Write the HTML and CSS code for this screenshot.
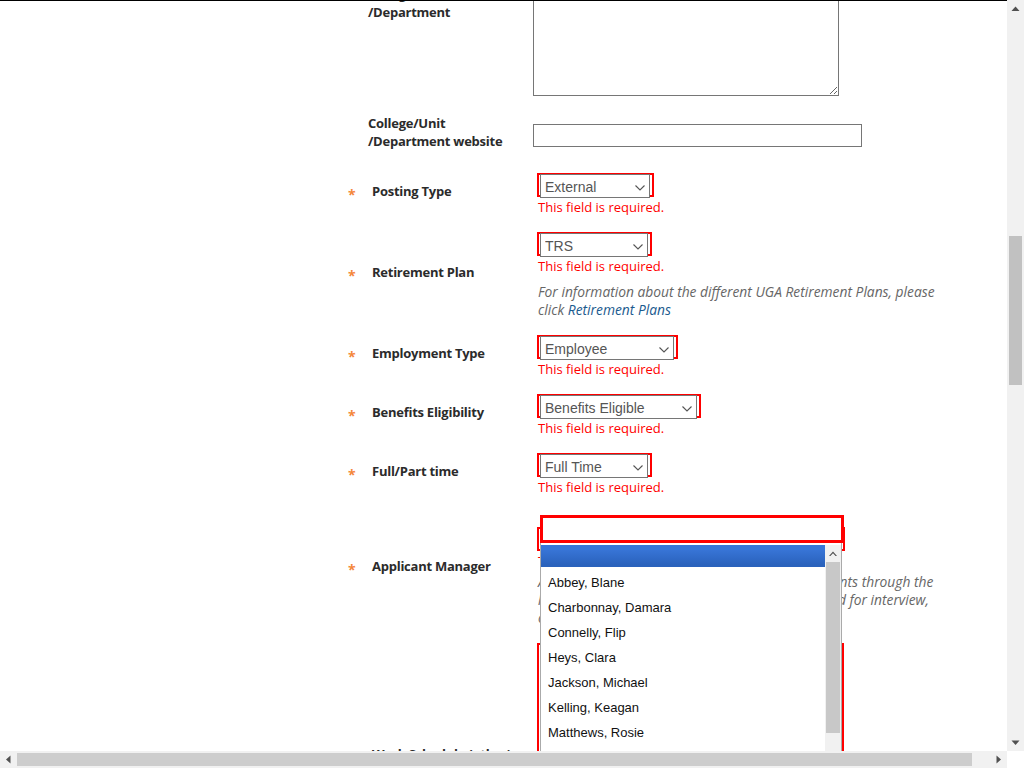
FILE: index.html
```html
<!DOCTYPE html>
<html lang="en">
<head>
    <meta charset="UTF-8">
    <meta name="viewport" content="width=device-width, initial-scale=1.0">
    <title>Create Posting</title>
    <link rel="stylesheet" href="styles.css">
</head>
<body>
    <div class="screen">
        <div class="page">
            <form class="posting-form">
                <div class="row row-top">
                    <span class="star"></span>
                    <label class="label">College/Unit<br>/Department</label>
                    <div class="field"><textarea class="textarea"></textarea></div>
                </div>
                <div class="row row-top row-website">
                    <span class="star"></span>
                    <label class="label">College/Unit<br>/Department website</label>
                    <div class="field"><input type="text" class="text-input"></div>
                </div>

                <div class="row">
                    <span class="star">*</span>
                    <label class="label req">Posting Type</label>
                    <div class="field field-req">
                        <div class="select-wrap">
                            <select class="select w-110"><option>External</option></select>
                            <svg class="chevron" width="10" height="6" viewBox="0 0 10 6"><path d="M0.5 0.5 L5 5 L9.5 0.5" fill="none" stroke="#555" stroke-width="1.1"/></svg>
                        </div>
                        <div class="error">This field is required.</div>
                    </div>
                </div>

                <div class="row">
                    <span class="star">*</span>
                    <label class="label req">Retirement Plan</label>
                    <div class="field field-req">
                        <div class="select-wrap">
                            <select class="select w-108"><option>TRS</option></select>
                            <svg class="chevron" width="10" height="6" viewBox="0 0 10 6"><path d="M0.5 0.5 L5 5 L9.5 0.5" fill="none" stroke="#555" stroke-width="1.1"/></svg>
                        </div>
                        <div class="error">This field is required.</div>
                        <p class="help">For information about the different UGA Retirement Plans, please click <a href="#">Retirement Plans</a></p>
                    </div>
                </div>

                <div class="row">
                    <span class="star">*</span>
                    <label class="label req">Employment Type</label>
                    <div class="field field-req">
                        <div class="select-wrap">
                            <select class="select w-134"><option>Employee</option></select>
                            <svg class="chevron" width="10" height="6" viewBox="0 0 10 6"><path d="M0.5 0.5 L5 5 L9.5 0.5" fill="none" stroke="#555" stroke-width="1.1"/></svg>
                        </div>
                        <div class="error">This field is required.</div>
                    </div>
                </div>

                <div class="row">
                    <span class="star">*</span>
                    <label class="label req">Benefits Eligibility</label>
                    <div class="field field-req">
                        <div class="select-wrap">
                            <select class="select w-157"><option>Benefits Eligible</option></select>
                            <svg class="chevron" width="10" height="6" viewBox="0 0 10 6"><path d="M0.5 0.5 L5 5 L9.5 0.5" fill="none" stroke="#555" stroke-width="1.1"/></svg>
                        </div>
                        <div class="error">This field is required.</div>
                    </div>
                </div>

                <div class="row">
                    <span class="star">*</span>
                    <label class="label req">Full/Part time</label>
                    <div class="field field-req">
                        <div class="select-wrap">
                            <select class="select w-108"><option>Full Time</option></select>
                            <svg class="chevron" width="10" height="6" viewBox="0 0 10 6"><path d="M0.5 0.5 L5 5 L9.5 0.5" fill="none" stroke="#555" stroke-width="1.1"/></svg>
                        </div>
                        <div class="error">This field is required.</div>
                    </div>
                </div>

                <div class="row">
                    <span class="star">*</span>
                    <label class="label req">Applicant Manager</label>
                    <div class="field field-req">
                        <div class="chosen-wrap">
                            <div class="chosen-drop">
                                <div class="chosen-search"></div>
                                <div class="chosen-list">
                                    <ul class="chosen-results">
                                        <li class="highlighted"></li>
                                        <li>Abbey, Blane</li>
                                        <li>Charbonnay, Damara</li>
                                        <li>Connelly, Flip</li>
                                        <li>Heys, Clara</li>
                                        <li>Jackson, Michael</li>
                                        <li>Kelling, Keagan</li>
                                        <li>Matthews, Rosie</li>
                                        <li>SNOW, JOHN</li>
                                        <li>Thompson, Lee</li>
                                    </ul>
                                    <div class="list-scroll">
                                        <div class="list-btn">
                                            <svg width="16" height="17" viewBox="0 0 16 17"><path d="M4 11 L8 6.5 L12 11 L10.6 11 L8 8.2 L5.4 11 Z" fill="#505050"/></svg>
                                        </div>
                                        <div class="list-thumb"></div>
                                    </div>
                                </div>
                            </div>
                        </div>
                        <div class="error">This field is required.</div>
                        <p class="help help-am">Applicant Managers can review and move applicants through the<br>hiring workflow, including those who were selected for interview,<br>offer and hire.</p>
                    </div>
                </div>

                <div class="row">
                    <span class="star"></span>
                    <label class="label req">Work Schedule (other)</label>
                    <div class="field field-req">
                        <div class="schedule-box"></div>
                    </div>
                </div>
            </form>
        </div>

        <div class="vscroll">
            <div class="sb-btn">
                <svg width="17" height="17" viewBox="0 0 17 17"><path d="M4.5 11 L8.5 6.5 L12.5 11 Z" fill="#505050"/></svg>
            </div>
            <div class="sb-track-v"><div class="sb-thumb-v"></div></div>
            <div class="sb-btn">
                <svg width="17" height="17" viewBox="0 0 17 17"><path d="M4.5 6.5 L8.5 11 L12.5 6.5 Z" fill="#505050"/></svg>
            </div>
        </div>

        <div class="hscroll">
            <div class="sb-btn">
                <svg width="17" height="17" viewBox="0 0 17 17"><path d="M10.5 4.5 L6 8.5 L10.5 12.5 Z" fill="#505050"/></svg>
            </div>
            <div class="sb-track-h"><div class="sb-thumb-h"></div></div>
            <div class="sb-btn">
                <svg width="17" height="17" viewBox="0 0 17 17"><path d="M6.5 4.5 L11 8.5 L6.5 12.5 Z" fill="#505050"/></svg>
            </div>
        </div>
        <div class="corner"></div>
    </div>
</body>
</html>
```

FILE: styles.css
```css
* {
    box-sizing: border-box;
}
html, body {
    margin: 0;
    padding: 0;
}
body {
    font-family: "Open Sans", sans-serif;
    color: #333;
    background-color: #fff;
}
.screen {
    display: grid;
    grid-template-columns: 1007px 17px;
    grid-template-rows: 751px 17px;
    width: 1024px;
    height: 768px;
    overflow: hidden;
}
.page {
    border-top: 1px solid #000;
    overflow: hidden;
    background-color: #fff;
}
.posting-form {
    margin: -16px 0 0 345px;
}

/* form rows */
.row {
    display: grid;
    grid-template-columns: 23px 165px auto;
    align-items: center;
    margin-bottom: 16px;
}
.row-top {
    align-items: start;
    margin-bottom: 17px;
}
.row-website {
    margin-bottom: 23px;
}
.row-website .label {
    padding-top: 1px;
}
.star {
    color: #f4873a;
    font-size: 14px;
    font-weight: bold;
    line-height: 17px;
    padding: 6px 0 0 3px;
    margin-bottom: 6px;
}
.label {
    font-size: 13px;
    font-weight: bold;
    line-height: 17px;
    letter-spacing: -0.25px;
    color: #2b2b2b;
    margin-bottom: 6px;
}
.row-top .label {
    line-height: 18px;
    margin-bottom: 0;
}
.label.req {
    padding-left: 4px;
}
.field-req {
    padding-left: 4px;
}

.textarea {
    display: block;
    width: 306px;
    height: 111px;
    border: 1px solid #767676;
    border-radius: 0;
    background-color: #fff;
}
.text-input {
    display: block;
    width: 329px;
    height: 23px;
    margin-top: 11px;
    border: 1px solid #767676;
    border-radius: 0;
    background-color: #fff;
}

/* red invalid outline round the selects */
.select-wrap {
    position: relative;
    display: inline-flex;
    height: 24px;
    border: 2px solid #f00;
    padding: 0 2px 0 1px;
}
.select {
    appearance: none;
    -webkit-appearance: none;
    height: 24px;
    margin-top: -1px;
    padding: 2px 0 0 4px;
    font-family: Arial, "Liberation Sans", sans-serif;
    font-size: 14px;
    color: #555;
    background-color: #fff;
    border: 1px solid #767676;
    border-radius: 0;
}
.chevron {
    position: absolute;
    top: 10px;
    right: 7px;
}
.w-108 { width: 108px; }
.w-110 { width: 110px; }
.w-134 { width: 134px; }
.w-157 { width: 157px; }

.error {
    color: #f00;
    font-size: 13px;
    line-height: 18px;
    margin-top: 1px;
    padding-left: 1px;
}
.help {
    font-size: 13.8px;
    font-style: italic;
    line-height: 18px;
    color: #666;
    max-width: 412px;
    margin: 8px 0 0 1px;
}
.help a {
    color: #1b5a8e;
    text-decoration: none;
}
.help-am {
    max-width: 430px;
    margin-top: 3px;
}

/* applicant manager chosen dropdown (opened) */
.chosen-wrap {
    position: relative;
    width: 308px;
    height: 24px;
    margin-top: 15px;
    border: 2px solid #f00;
}
.chosen-drop {
    position: absolute;
    top: -14px;
    left: 1px;
    z-index: 5;
}
.chosen-search {
    width: 304px;
    height: 28px;
    border: 3px solid #f00;
    background-color: #fff;
}
.chosen-list {
    display: flex;
    width: 302px;
    height: 280px;
    padding-top: 2px;
    background-color: #fff;
    border: 1px solid #aaa;
    border-top: none;
}
.chosen-results {
    flex: 1;
    list-style: none;
    margin: 0;
    padding: 0;
    font-family: Arial, "Liberation Sans", sans-serif;
    font-size: 13px;
    color: #111;
}
.chosen-results li {
    height: 25px;
    line-height: 25px;
    padding-left: 7px;
}
.chosen-results li.highlighted {
    height: 22px;
    margin-bottom: 3px;
    background: linear-gradient(#3875d7 20%, #2a62bc 90%);
}
.list-scroll {
    display: flex;
    flex-direction: column;
    width: 16px;
    background-color: #f1f1f1;
}
.list-btn {
    height: 17px;
}
.list-btn svg {
    display: block;
}
.list-thumb {
    height: 171px;
    margin: 0 1px;
    background-color: #c8c8c8;
}

.schedule-box {
    width: 307px;
    height: 228px;
    border: 2px solid #f00;
}

/* window scrollbars */
.vscroll {
    display: flex;
    flex-direction: column;
    background-color: #f1f1f1;
}
.hscroll {
    display: flex;
    background-color: #f1f1f1;
}
.sb-btn {
    width: 17px;
    height: 17px;
    flex: none;
}
.sb-btn svg {
    display: block;
}
.sb-track-v {
    flex: 1;
    padding-top: 219px;
}
.sb-thumb-v {
    height: 149px;
    margin: 0 2px;
    background-color: #c1c1c1;
}
.sb-track-h {
    flex: 1;
    padding-top: 2px;
}
.sb-thumb-h {
    width: 955px;
    height: 13px;
    background-color: #cdcdcd;
}
.corner {
    background-color: #fff;
}
```
